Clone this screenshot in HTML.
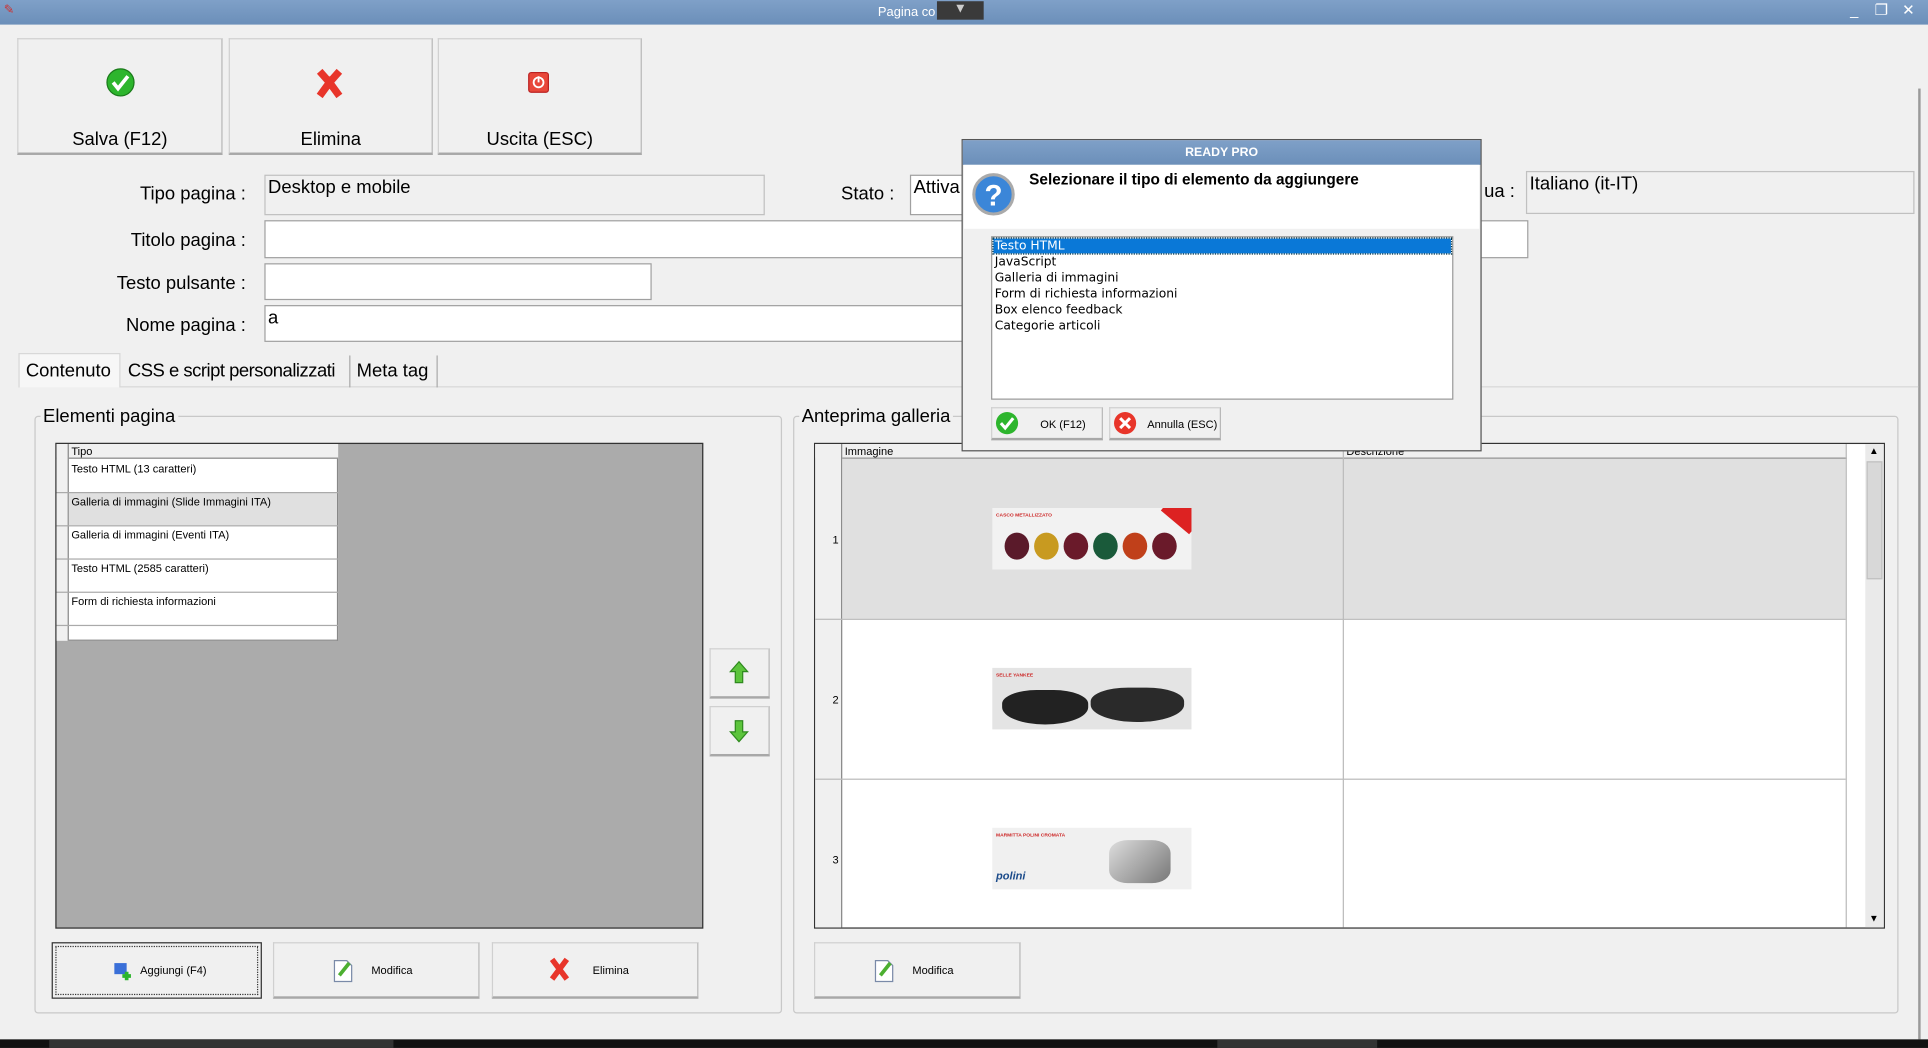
<!DOCTYPE html>
<html><head><meta charset="utf-8"><style>
*{box-sizing:border-box;margin:0;padding:0;white-space:nowrap}
html,body{width:1928px;height:1048px;overflow:hidden;background:#f0f0f0}
#w{position:absolute;left:0;top:0;width:1568px;height:852px;transform:scale(1.2296,1.2300);transform-origin:0 0;font-family:"Liberation Sans",sans-serif;color:#000;background:#f0f0f0}
.a{position:absolute}
.btn{position:absolute;background:#f0f0f0;border:1px solid #d0d0d0;border-bottom:2px solid #a8a8a8;border-right:1px solid #b8b8b8}
.lbl{position:absolute;font-size:15px;text-align:right;width:190px}
.fld{position:absolute;background:#fff;border:1px solid #a0a0a0;font-size:15px;padding:1px 2px}
.sb{font-size:9px;position:absolute}
</style></head><body><div id="w">
<div class="a" style="left:0;top:0;width:1568px;height:20px;background:linear-gradient(#7fa0c8,#6b8fb9)"></div>
<div class="a" style="left:714px;top:4px;font-size:10.5px;color:#fff">Pagina co</div>
<div class="a" style="left:762px;top:1px;width:38px;height:15px;background:#3a3a3a;color:#ccc;font-size:11px;text-align:center">▼</div>
<div class="a" style="left:3px;top:3px;width:10px;height:12px;color:#c33;font-size:10px">✎</div>
<div class="a" style="left:1500px;top:1px;width:16px;height:16px;color:#fff;font-size:12px;text-align:center">_</div>
<div class="a" style="left:1522px;top:1px;width:16px;height:16px;color:#fff;font-size:12px;text-align:center">❐</div>
<div class="a" style="left:1544px;top:1px;width:16px;height:16px;color:#fff;font-size:12px;text-align:center">✕</div>
<div class="a" style="left:1560px;top:72px;width:2px;height:773px;background:#9a9a9a"></div>

<div class="btn" style="left:14px;top:31px;width:167px;height:95px"></div>
<div class="btn" style="left:186px;top:31px;width:166px;height:95px"></div>
<div class="btn" style="left:356px;top:31px;width:166px;height:95px"></div>
<svg class="a" style="left:86px;top:55px" width="24" height="24"><circle cx="12" cy="12" r="11" fill="#2db52d" stroke="#1a7a1a"/><path d="M6 12l4 5 8-10" stroke="#fff" stroke-width="3" fill="none"/></svg>
<svg class="a" style="left:256px;top:55px" width="24" height="26"><path d="M4 3l8 9 8-9M4 23l8-11 8 11" stroke="#e8352a" stroke-width="6" fill="none"/></svg>
<svg class="a" style="left:429px;top:58px" width="18" height="18"><rect x="1" y="1" width="16" height="16" rx="2" fill="#e8473a" stroke="#b22"/><circle cx="9" cy="9" r="4" stroke="#fff" stroke-width="1.5" fill="none"/><path d="M9 4v5" stroke="#fff" stroke-width="1.5"/></svg>
<div class="a" style="left:14px;top:105px;width:167px;text-align:center;font-size:15px">Salva (F12)</div>
<div class="a" style="left:186px;top:105px;width:166px;text-align:center;font-size:15px">Elimina</div>
<div class="a" style="left:356px;top:105px;width:166px;text-align:center;font-size:15px">Uscita (ESC)</div>

<div class="lbl" style="left:10px;top:149px">Tipo pagina :</div>
<div class="fld" style="left:215px;top:142px;width:407px;height:33px;background:#f0f0f0;border-color:#c0c0c0">Desktop e mobile</div>
<div class="a" style="left:684px;top:149px;font-size:15px">Stato :</div>
<div class="fld" style="left:740px;top:142px;width:50px;height:33px">Attiva</div>
<div class="a" style="left:1207px;top:147px;font-size:15px">ua :</div>
<div class="fld" style="left:1241px;top:139px;width:316px;height:35px;background:#f0f0f0;border-color:#c0c0c0">Italiano (it-IT)</div>
<div class="lbl" style="left:10px;top:187px">Titolo pagina :</div>
<div class="fld" style="left:215px;top:179px;width:1028px;height:31px"></div>
<div class="lbl" style="left:10px;top:222px">Testo pulsante :</div>
<div class="fld" style="left:215px;top:214px;width:315px;height:30px"></div>
<div class="lbl" style="left:10px;top:256px">Nome pagina :</div>
<div class="fld" style="left:215px;top:248px;width:580px;height:30px">a</div>

<div class="a" style="left:15px;top:314px;width:1545px;height:1px;background:#d8d8d8"></div>
<div class="a" style="left:15px;top:287px;width:83px;height:28px;background:#f7f7f7;border:1px solid #d8d8d8;border-bottom:none;font-size:15px;padding:5px 0 0 5px">Contenuto</div>
<div class="a" style="left:98px;top:289px;width:187px;height:26px;border-right:1px solid #aaa;font-size:15px;letter-spacing:-0.4px;padding:4px 0 0 6px">CSS e script personalizzati</div>
<div class="a" style="left:285px;top:289px;width:71px;height:26px;border-right:1px solid #aaa;font-size:15px;padding:4px 0 0 5px">Meta tag</div>

<div class="a" style="left:28px;top:338px;width:608px;height:486px;border:1px solid #c8c8c8;border-radius:3px"></div>
<div class="a" style="left:33px;top:330px;background:#f0f0f0;font-size:15px;padding:0 2px">Elementi pagina</div>
<div class="a" style="left:45px;top:360px;width:527px;height:395px;background:#ababab;border:1px solid #333"></div>
<div class="a" style="left:46px;top:361px;width:229px;height:160px;background:#fff;border-right:1px solid #888;border-bottom:1px solid #888"></div>
<div class="a" style="left:46px;top:361px;width:229px;height:12px;background:#f0f0f0;border-bottom:1px solid #888"></div>
<div class="a" style="left:46px;top:361px;width:10px;height:160px;background:#f0f0f0;border-right:1px solid #888"></div>
<div class="sb" style="left:58px;top:362px">Tipo</div>
<div class="a" style="left:56px;top:400px;width:218px;height:27px;background:#e0e0e0"></div>
<div class="a" style="left:46px;top:400px;width:229px;height:1px;background:#aaa"></div>
<div class="a" style="left:46px;top:427px;width:229px;height:1px;background:#aaa"></div>
<div class="a" style="left:46px;top:454px;width:229px;height:1px;background:#aaa"></div>
<div class="a" style="left:46px;top:481px;width:229px;height:1px;background:#aaa"></div>
<div class="a" style="left:46px;top:508px;width:229px;height:1px;background:#aaa"></div>
<div class="sb" style="left:58px;top:376px">Testo HTML (13 caratteri)</div>
<div class="sb" style="left:58px;top:403px">Galleria di immagini (Slide Immagini ITA)</div>
<div class="sb" style="left:58px;top:430px">Galleria di immagini (Eventi ITA)</div>
<div class="sb" style="left:58px;top:457px">Testo HTML (2585 caratteri)</div>
<div class="sb" style="left:58px;top:484px">Form di richiesta informazioni</div>

<div class="btn" style="left:577px;top:527px;width:49px;height:41px"></div>
<div class="btn" style="left:577px;top:574px;width:49px;height:41px"></div>
<svg class="a" style="left:592px;top:537px" width="18" height="20"><path d="M9 1L2 9h4v9h6V9h4z" fill="#5cc43c" stroke="#2f8a1f"/></svg>
<svg class="a" style="left:592px;top:584px" width="18" height="20"><path d="M9 19L2 11h4V2h6v9h4z" fill="#5cc43c" stroke="#2f8a1f"/></svg>

<div class="btn" style="left:42px;top:766px;width:171px;height:46px;border:1px solid #333;outline:1px dotted #333;outline-offset:-4px"></div>
<div class="btn" style="left:222px;top:766px;width:168px;height:46px"></div>
<div class="btn" style="left:400px;top:766px;width:168px;height:46px"></div>
<svg class="a" style="left:92px;top:782px" width="16" height="16"><rect x="1" y="1" width="10" height="9" fill="#3a6fd8"/><path d="M11 8v7M7.5 11.5h7" stroke="#2db52d" stroke-width="3"/></svg>
<div class="sb" style="left:114px;top:784px">Aggiungi (F4)</div>
<svg class="a" style="left:270px;top:779px" width="18" height="20"><path d="M2 2h10l4 4v13H2z" fill="#fff" stroke="#7a8aa8"/><path d="M6 14l8-10" stroke="#4caf30" stroke-width="3"/></svg>
<div class="sb" style="left:302px;top:784px">Modifica</div>
<svg class="a" style="left:446px;top:778px" width="18" height="20"><path d="M3 2l6 8 6-8M3 18l6-8 6 8" stroke="#e8352a" stroke-width="4.5" fill="none"/></svg>
<div class="sb" style="left:482px;top:784px">Elimina</div>

<div class="a" style="left:645px;top:338px;width:899px;height:486px;border:1px solid #c8c8c8;border-radius:3px"></div>
<div class="a" style="left:650px;top:330px;background:#f0f0f0;font-size:15px;padding:0 2px">Anteprima galleria</div>
<div class="a" style="left:662px;top:360px;width:871px;height:395px;background:#fff;border:1px solid #333"></div>
<div class="a" style="left:663px;top:361px;width:839px;height:12px;background:#f0f0f0;border-bottom:1px solid #888"></div>
<div class="a" style="left:663px;top:361px;width:22px;height:393px;background:#f0f0f0;border-right:1px solid #888"></div>
<div class="sb" style="left:687px;top:362px">Immagine</div>
<div class="sb" style="left:1095px;top:362px">Descrizione</div>
<div class="a" style="left:685px;top:373px;width:816px;height:130px;background:#e0e0e0"></div>
<div class="a" style="left:1092px;top:361px;width:1px;height:393px;background:#bbb"></div>
<div class="a" style="left:663px;top:503px;width:838px;height:1px;background:#bbb"></div>
<div class="a" style="left:663px;top:633px;width:838px;height:1px;background:#bbb"></div>
<div class="a" style="left:1501px;top:361px;width:1px;height:393px;background:#bbb"></div>
<div class="sb" style="left:677px;top:434px">1</div>
<div class="sb" style="left:677px;top:564px">2</div>
<div class="sb" style="left:677px;top:694px">3</div>
<div class="a" style="left:1517px;top:361px;width:15px;height:393px;background:#eaeaea"></div>
<div class="a" style="left:1518px;top:375px;width:13px;height:96px;background:#d8d8d8;border:1px solid #c0c0c0"></div>
<div class="sb" style="left:1520px;top:362px;font-size:8px">▲</div>
<div class="sb" style="left:1520px;top:742px;font-size:8px">▼</div>
<div class="a" style="left:807px;top:413px;width:162px;height:50px;background:#f2f2f2;overflow:hidden">
<div class="a" style="left:3px;top:3px;font-size:4px;color:#c22;font-weight:bold">CASCO METALLIZZATO</div>
<div class="a" style="left:140px;top:-6px;width:30px;height:20px;background:#d22;transform:rotate(40deg)"></div>
<div class="a" style="left:10px;top:20px;width:20px;height:22px;border-radius:50%;background:#5a1a2a"></div>
<div class="a" style="left:34px;top:20px;width:20px;height:22px;border-radius:50%;background:#c89a20"></div>
<div class="a" style="left:58px;top:20px;width:20px;height:22px;border-radius:50%;background:#6a1a2a"></div>
<div class="a" style="left:82px;top:20px;width:20px;height:22px;border-radius:50%;background:#1a5a3a"></div>
<div class="a" style="left:106px;top:20px;width:20px;height:22px;border-radius:50%;background:#c0401a"></div>
<div class="a" style="left:130px;top:20px;width:20px;height:22px;border-radius:50%;background:#6a1a2a"></div>
</div>
<div class="a" style="left:807px;top:543px;width:162px;height:50px;background:#e4e4e4;overflow:hidden">
<div class="a" style="left:3px;top:3px;font-size:4px;color:#c22;font-weight:bold">SELLE YANKEE</div>
<div class="a" style="left:8px;top:18px;width:70px;height:28px;border-radius:40% 40% 50% 50%;background:#222"></div>
<div class="a" style="left:80px;top:16px;width:76px;height:28px;border-radius:40% 40% 50% 50%;background:#2a2a2a"></div>
</div>
<div class="a" style="left:807px;top:673px;width:162px;height:50px;background:#f0f0f0;overflow:hidden">
<div class="a" style="left:3px;top:3px;font-size:4px;color:#c22;font-weight:bold">MARMITTA POLINI CROMATA</div>
<div class="a" style="left:3px;top:34px;font-size:9px;color:#1a4a8a;font-weight:bold;font-style:italic">polini</div>
<div class="a" style="left:95px;top:10px;width:50px;height:35px;border-radius:30%;background:linear-gradient(135deg,#ddd,#777)"></div>
</div>
<div class="btn" style="left:662px;top:766px;width:168px;height:46px"></div>
<svg class="a" style="left:710px;top:779px" width="18" height="20"><path d="M2 2h10l4 4v13H2z" fill="#fff" stroke="#7a8aa8"/><path d="M6 14l8-10" stroke="#4caf30" stroke-width="3"/></svg>
<div class="sb" style="left:742px;top:784px">Modifica</div>

<div class="a" style="left:0;top:845px;width:1568px;height:7px;background:#111"></div>
<div class="a" style="left:40px;top:845px;width:280px;height:7px;background:#333"></div>
<div class="a" style="left:990px;top:845px;width:130px;height:7px;background:#333"></div>

<div class="a" style="left:782px;top:113px;width:423px;height:254px;background:#f0f0f0;border:1px solid #555"></div>
<div class="a" style="left:783px;top:114px;width:421px;height:20px;background:linear-gradient(#7fa0c8,#6b8fb9);color:#fff;font-size:10px;font-weight:bold;text-align:center;padding-top:5px">READY PRO</div>
<div class="a" style="left:784px;top:134px;width:419px;height:52px;background:#fff"></div>
<svg class="a" style="left:790px;top:140px" width="36" height="36"><circle cx="18" cy="18" r="16" fill="#3b86d8" stroke="#aaa" stroke-width="2.5"/><text x="18" y="27" font-size="24" font-weight="bold" fill="#fff" text-anchor="middle" font-family="Liberation Sans">?</text></svg>
<div class="a" style="left:837px;top:139px;font-size:12.5px;font-weight:bold">Selezionare il tipo di elemento da aggiungere</div>
<div class="a" style="left:806px;top:192px;width:376px;height:133px;background:#fff;border:1px solid #999"></div>
<div class="a" style="left:808px;top:194px;width:372px;height:12px;background:#0a78d7;outline:1px dotted #034"></div>
<div class="a" style="left:809px;top:194px;font-size:10px;line-height:13px;font-family:'DejaVu Sans',sans-serif"><span style="color:#fff">Testo HTML</span><br>JavaScript<br>Galleria di immagini<br>Form di richiesta informazioni<br>Box elenco feedback<br>Categorie articoli</div>
<div class="btn" style="left:806px;top:331px;width:91px;height:27px"></div>
<div class="btn" style="left:902px;top:331px;width:91px;height:27px"></div>
<svg class="a" style="left:809px;top:334px" width="20" height="20"><circle cx="10" cy="10" r="9" fill="#2db52d"/><path d="M5 10l3.5 4 6.5-8" stroke="#fff" stroke-width="2.5" fill="none"/></svg>
<div class="sb" style="left:846px;top:340px">OK (F12)</div>
<svg class="a" style="left:905px;top:334px" width="20" height="20"><circle cx="10" cy="10" r="9" fill="#e8352a"/><path d="M6 6l8 8M14 6l-8 8" stroke="#fff" stroke-width="2.5"/></svg>
<div class="sb" style="left:933px;top:340px">Annulla (ESC)</div>
</div></body></html>
